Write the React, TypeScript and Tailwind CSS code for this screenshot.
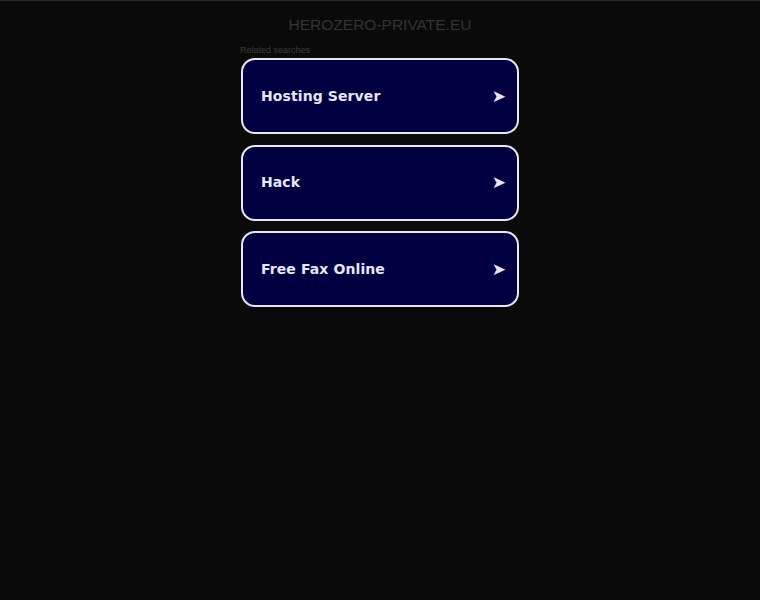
const items = ["Hosting Server", "Hack", "Free Fax Online"];

export default function App() {
  return (
    <div className="min-h-[600px] w-full bg-[#0a0a0a] border-t border-[#2a2a2a]">
      <div className="pt-[14px] text-center text-[15.5px] leading-[20px] text-[#333333] [font-family:'Liberation_Sans',Arial,sans-serif]">
        HEROZERO-PRIVATE.EU
      </div>
      <div className="mx-auto w-[280px] pt-[9px]">
        <div className="text-[9px] leading-[12px] text-[#3a3a3a] [font-family:'Liberation_Sans',Arial,sans-serif]">
          Related searches
        </div>
        <div className="mt-[2px] flex flex-col gap-[10.5px] pl-[1px]">
          {items.map((label) => (
            <a
              key={label}
              href="#"
              className="flex h-[76px] w-[278px] items-center justify-between rounded-[14px] border-2 border-[#e8e8f4] bg-[#000040] pl-[18px] pr-[11px]"
            >
              <span className="text-[14px] font-bold tracking-[0.1px] text-[#e6e6f8] [font-family:'DejaVu_Sans',sans-serif]">
                {label}
              </span>
              <span className="text-[17px] leading-none text-[#e6e6f8] [font-family:'DejaVu_Sans',sans-serif]">➤</span>
            </a>
          ))}
        </div>
      </div>
    </div>
  );
}
